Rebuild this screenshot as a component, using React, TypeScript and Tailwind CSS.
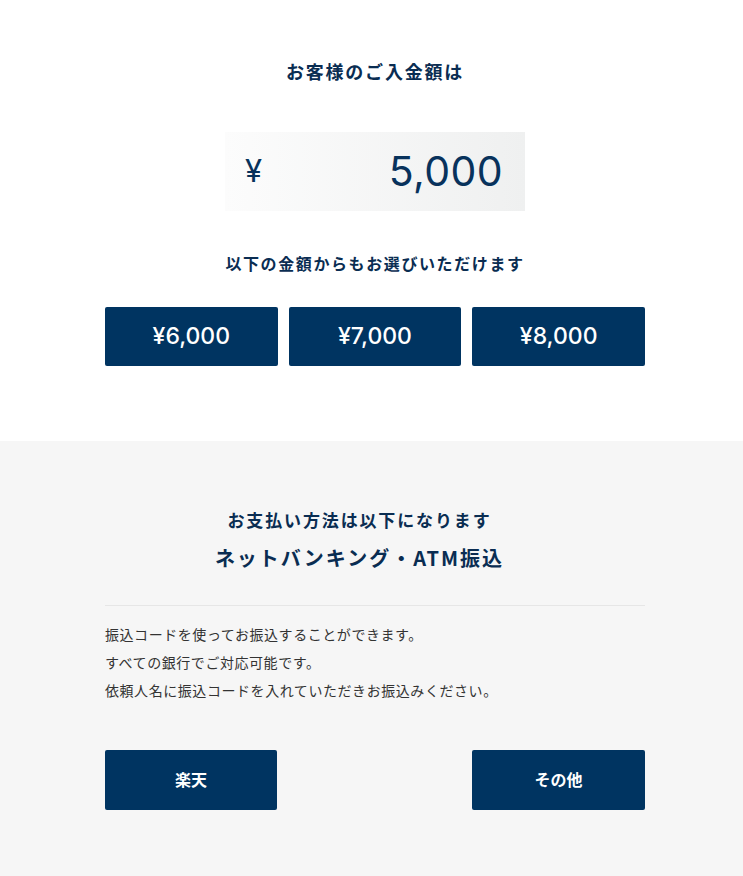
import React from "react";

const jp = '"Noto Sans CJK JP", "Noto Sans", sans-serif';
const num = 'Inter, "Noto Sans", sans-serif';

export default function App() {
  return (
    <div className="w-full min-h-[876px] bg-white" style={{ fontFamily: jp }}>
      <section className="bg-white pt-[58px] pb-[75px]">
        <div className="w-[540px] ml-[105px] flex flex-col items-center">
          <h2 className="text-[18px] leading-[26px] font-bold tracking-[0.1em] text-[#0a2d52]">
            お客様のご入金額は
          </h2>
          <div className="mt-[48px] w-[300px] h-[79px] bg-gradient-to-r from-[#fcfcfc] to-[#eff0f0] flex items-center justify-between pl-[20px] pr-[22px]">
            <span className="text-[31px] font-normal text-[#08325c]" style={{ fontFamily: num }}>¥</span>
            <span className="text-[41px] font-normal text-[#08325c] tracking-[0.01em]" style={{ fontFamily: num }}>5,000</span>
          </div>
          <h3 className="mt-[40px] text-[16px] leading-[24px] font-bold tracking-[0.1em] text-[#0a2d52]">
            以下の金額からもお選びいただけます
          </h3>
          <div className="mt-[32px] w-full grid grid-cols-3 gap-[11px]">
            {["¥6,000", "¥7,000", "¥8,000"].map((v) => (
              <button
                key={v}
                className="h-[59px] rounded-[2px] bg-[#003461] text-white text-[23px] font-medium"
                style={{ fontFamily: num }}
              >
                {v}
              </button>
            ))}
          </div>
        </div>
      </section>
      <section className="bg-[#f6f6f6] pt-[66px] pb-[67px]">
        <div className="w-[540px] ml-[105px] flex flex-col">
          <h2 className="pr-[31px] text-center text-[17px] leading-[26px] font-bold tracking-[0.11em] text-[#0a2d52]">
            お支払い方法は以下になります
          </h2>
          <h2 className="pr-[31px] mt-[10px] text-center text-[20px] leading-[30px] font-bold tracking-[0.1em] text-[#0a2d52]">
            ネットバンキング・ATM振込
          </h2>
          <div className="mt-[32px] h-px bg-[#e6e6e6]" />
          <div className="mt-[14px] text-[14px] leading-[28px] tracking-[0.04em] text-[#333333]">
            <p>振込コードを使ってお振込することができます。</p>
            <p>すべての銀行でご対応可能です。</p>
            <p>依頼人名に振込コードを入れていただきお振込みください。</p>
          </div>
          <div className="mt-[46px] flex justify-between">
            <button className="w-[172px] h-[60px] pb-[3px] rounded-[2px] bg-[#003461] text-white text-[16px] font-bold">
              楽天
            </button>
            <button className="w-[173px] h-[60px] pb-[3px] rounded-[2px] bg-[#003461] text-white text-[16px] font-bold">
              その他
            </button>
          </div>
        </div>
      </section>
    </div>
  );
}
